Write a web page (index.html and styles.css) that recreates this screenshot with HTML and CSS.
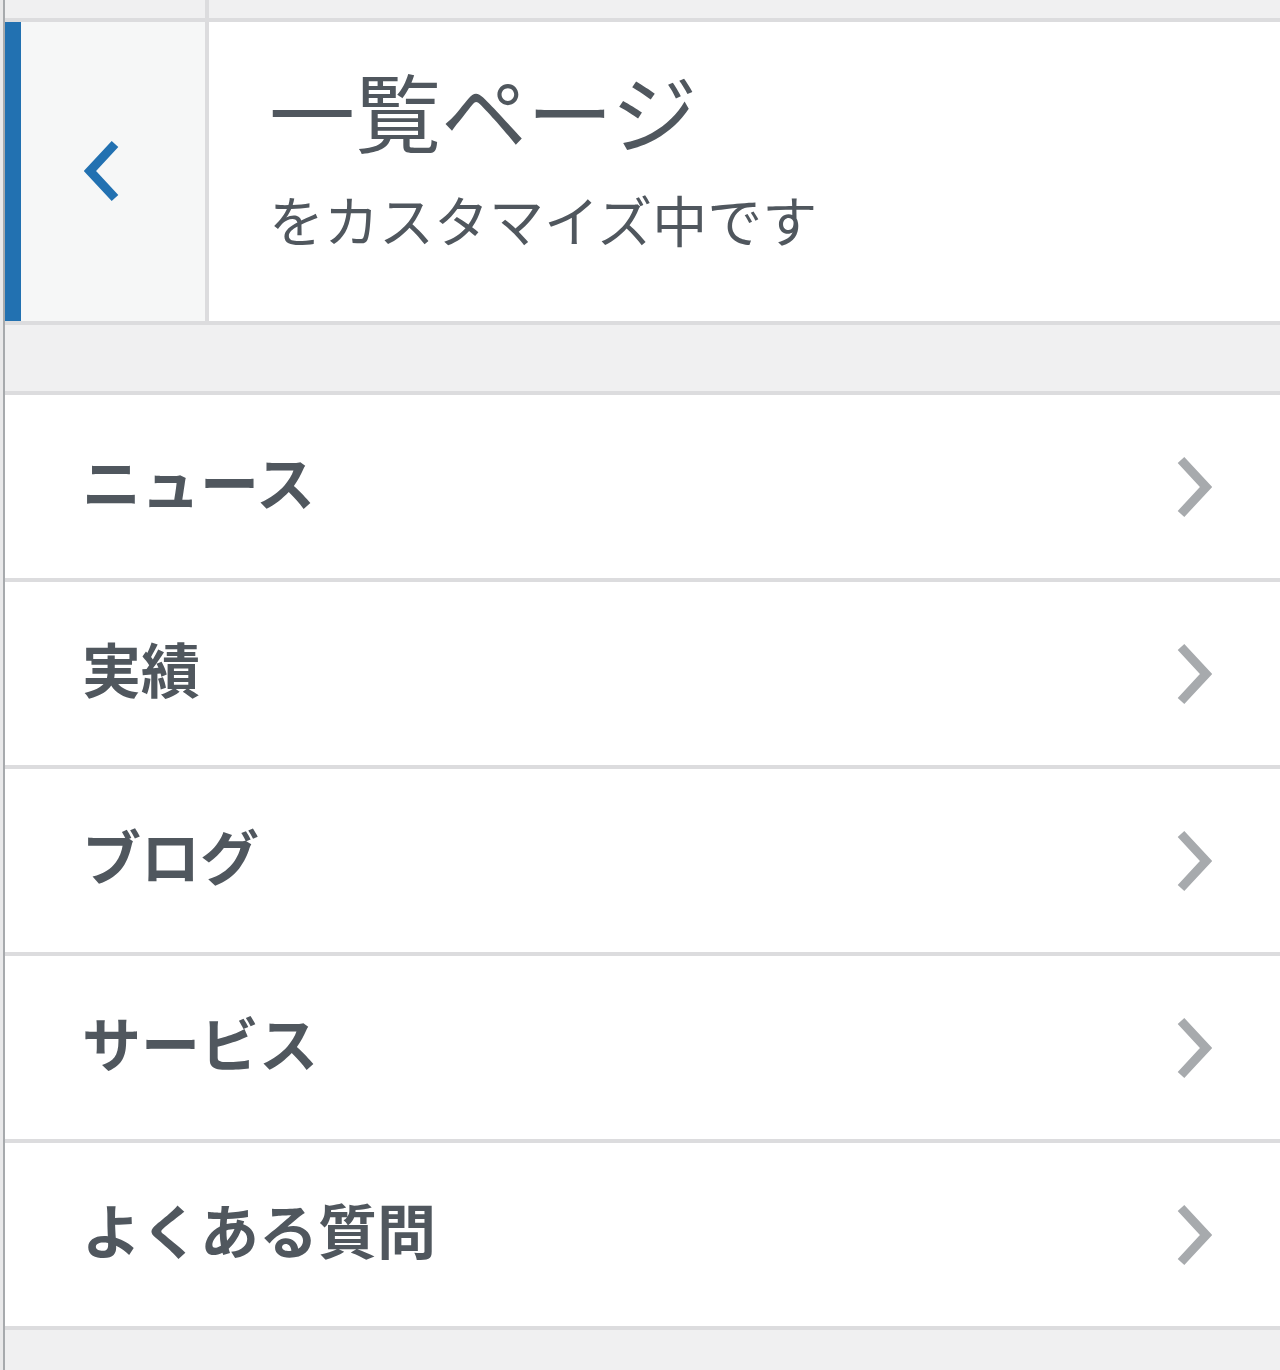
FILE: index.html
```html
<!DOCTYPE html>
<html lang="ja">
<head>
  <meta charset="UTF-8">
  <meta name="viewport" content="width=device-width, initial-scale=1.0">
  <link rel="stylesheet" href="styles.css">
</head>
<body>

<div id="sidebar">
  <div class="topStrip">
    <div class="topStripBack"></div>
  </div>

  <div class="panelHeader">
    <button class="backButton" aria-label="戻る">
      <svg width="36" height="62" viewBox="0 0 36 62">
        <polyline points="31,4 6,31 31,58" fill="none" stroke="#2271b1" stroke-width="9"/>
      </svg>
    </button>
    <div class="panelInfo">
      <h3 class="panelTitle">一覧ページ</h3>
      <p class="panelSub">をカスタマイズ中です</p>
    </div>
  </div>

  <div class="spacer"></div>

  <ul class="sectionList">
    <li class="sectionItem"><span>ニュース</span>
      <svg width="36" height="62" viewBox="0 0 36 62"><polyline points="5,4 30,31 5,58" fill="none" stroke="#a7aaad" stroke-width="9"/></svg>
    </li>
    <li class="sectionItem"><span>実績</span>
      <svg width="36" height="62" viewBox="0 0 36 62"><polyline points="5,4 30,31 5,58" fill="none" stroke="#a7aaad" stroke-width="9"/></svg>
    </li>
    <li class="sectionItem"><span>ブログ</span>
      <svg width="36" height="62" viewBox="0 0 36 62"><polyline points="5,4 30,31 5,58" fill="none" stroke="#a7aaad" stroke-width="9"/></svg>
    </li>
    <li class="sectionItem"><span>サービス</span>
      <svg width="36" height="62" viewBox="0 0 36 62"><polyline points="5,4 30,31 5,58" fill="none" stroke="#a7aaad" stroke-width="9"/></svg>
    </li>
    <li class="sectionItem"><span>よくある質問</span>
      <svg width="36" height="62" viewBox="0 0 36 62"><polyline points="5,4 30,31 5,58" fill="none" stroke="#a7aaad" stroke-width="9"/></svg>
    </li>
  </ul>
</div>

</body>
</html>
```

FILE: styles.css
```css
body {
  margin: 0;
  height: 1370px;
  background-color: #e9e9ea;
  font-family: "Noto Sans CJK JP", "Noto Sans", sans-serif;
  color: #50575e;
  overflow: hidden;
}

#sidebar {
  margin-left: 3px;
  border-left: 2px solid #a7aaad;
  height: 100%;
  background-color: #f0f0f1;
}

.topStrip {
  height: 18px;
  background-color: #f0f0f1;
  border-bottom: 4px solid #dcdcde;
}

.topStripBack {
  width: 200px;
  height: 100%;
  border-right: 4px solid #dcdcde;
}

.panelHeader {
  display: flex;
  height: 299px;
  background-color: #fff;
  border-bottom: 4px solid #dcdcde;
}

.backButton {
  display: flex;
  align-items: center;
  justify-content: center;
  box-sizing: border-box;
  width: 204px;
  padding: 0;
  background-color: #f6f7f7;
  border: none;
  border-left: 16px solid #2271b1;
  border-right: 4px solid #dcdcde;
  cursor: pointer;
}

.backButton svg {
  margin: 0 22px 2px 0;
}

.panelInfo {
  flex: 1;
  padding: 40px 0 0 60px;
}

.panelTitle {
  margin: 0;
  font-size: 86px;
  line-height: 96px;
  font-weight: 400;
}

.panelSub {
  margin: 27px 0 0 0;
  font-size: 55px;
  line-height: 66px;
}

.spacer {
  height: 66px;
  background-color: #f0f0f1;
}

.sectionList {
  list-style: none;
  margin: 0;
  padding: 0;
  background-color: #fff;
  border-top: 4px solid #dcdcde;
}

.sectionItem {
  display: flex;
  align-items: center;
  justify-content: space-between;
  box-sizing: border-box;
  height: 187px;
  padding: 0 68px 12px 77px;
  border-bottom: 4px solid #dcdcde;
  font-size: 59px;
  font-weight: 700;
}

.sectionItem svg {
  margin-top: 12px;
}
```
